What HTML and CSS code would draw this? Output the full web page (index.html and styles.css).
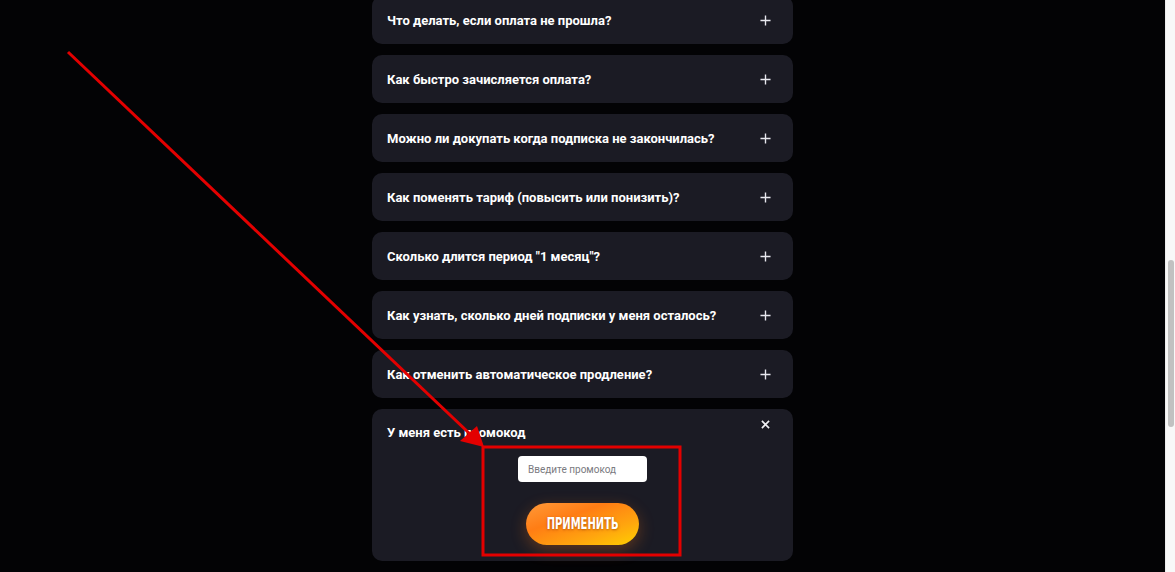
FILE: index.html
```html
<!DOCTYPE html>
<html lang="ru">
<head>
    <meta charset="UTF-8">
    <meta name="viewport" content="width=device-width, initial-scale=1.0">
    <title>Вопросы и ответы</title>
    <link rel="stylesheet" href="styles.css">
</head>
<body>
    <div class="page">
        <main class="content">
            <div class="faq">
                <div class="faq-item">
                    <span class="faq-question">Что делать, если оплата не прошла?</span>
                    <svg class="faq-icon" viewBox="0 0 12 12"><path d="M6 0.5V11.5M0.5 6H11.5"/></svg>
                </div>
                <div class="faq-item">
                    <span class="faq-question">Как быстро зачисляется оплата?</span>
                    <svg class="faq-icon" viewBox="0 0 12 12"><path d="M6 0.5V11.5M0.5 6H11.5"/></svg>
                </div>
                <div class="faq-item">
                    <span class="faq-question">Можно ли докупать когда подписка не закончилась?</span>
                    <svg class="faq-icon" viewBox="0 0 12 12"><path d="M6 0.5V11.5M0.5 6H11.5"/></svg>
                </div>
                <div class="faq-item">
                    <span class="faq-question">Как поменять тариф (повысить или понизить)?</span>
                    <svg class="faq-icon" viewBox="0 0 12 12"><path d="M6 0.5V11.5M0.5 6H11.5"/></svg>
                </div>
                <div class="faq-item">
                    <span class="faq-question">Сколько длится период "1 месяц"?</span>
                    <svg class="faq-icon" viewBox="0 0 12 12"><path d="M6 0.5V11.5M0.5 6H11.5"/></svg>
                </div>
                <div class="faq-item">
                    <span class="faq-question">Как узнать, сколько дней подписки у меня осталось?</span>
                    <svg class="faq-icon" viewBox="0 0 12 12"><path d="M6 0.5V11.5M0.5 6H11.5"/></svg>
                </div>
                <div class="faq-item">
                    <span class="faq-question">Как отменить автоматическое продление?</span>
                    <svg class="faq-icon" viewBox="0 0 12 12"><path d="M6 0.5V11.5M0.5 6H11.5"/></svg>
                </div>
                <div class="promo">
                    <div class="promo-head">
                        <span class="faq-question">У меня есть промокод</span>
                        <svg class="close-icon" viewBox="0 0 10 10"><path d="M1 1L9 9M9 1L1 9"/></svg>
                    </div>
                    <div class="promo-form">
                        <input class="promo-input" type="text" placeholder="Введите промокод">
                        <button class="promo-button"><span class="promo-button-text">ПРИМЕНИТЬ</span></button>
                    </div>
                </div>
            </div>
        </main>
        <div class="scrollbar">
            <div class="scrollbar-thumb"></div>
        </div>
    </div>

    <!-- annotation drawn over the screenshot -->
    <svg class="annotation" viewBox="0 0 1175 572">
        <line x1="68" y1="52" x2="470" y2="434" stroke="#e30000" stroke-width="3"/>
        <polygon points="484,447 460,441 477,426" fill="#e30000"/>
        <rect x="483" y="447" width="197" height="108" fill="none" stroke="#e30000" stroke-width="3"/>
    </svg>
</body>
</html>
```

FILE: styles.css
```css
* {
    margin: 0;
    padding: 0;
    box-sizing: border-box;
}

body {
    font-family: Roboto, 'Liberation Sans', Arial, sans-serif;
    background-color: #030305;
    color: #fff;
    height: 572px;
    overflow: hidden;
}

.page {
    display: flex;
    height: 572px;
}

.content {
    flex: 1;
    display: flex;
    justify-content: center;
}

.faq {
    width: 421px;
    margin-top: -4px;
    display: flex;
    flex-direction: column;
    gap: 11px;
}

.faq-item {
    height: 48px;
    background-color: #1b1b24;
    border-radius: 10px;
    padding: 0 22px 0 15px;
    display: flex;
    align-items: center;
    justify-content: space-between;
}

.faq-question {
    font-size: 13px;
    font-weight: bold;
    color: #fff;
}

.faq-icon {
    width: 11px;
    height: 11px;
    stroke: #e8e8ee;
    stroke-width: 1.5;
    fill: none;
}

.promo {
    height: 152px;
    background-color: #1b1b24;
    border-radius: 10px;
    padding: 10px 22px 0 15px;
}

.promo-head {
    display: flex;
    justify-content: space-between;
    align-items: flex-start;
}

.promo-head .faq-question {
    margin-top: 6px;
}

.close-icon {
    width: 9px;
    height: 9px;
    margin-top: 1px;
    margin-right: 1px;
    stroke: #f0f0f4;
    stroke-width: 1.8;
    fill: none;
}

.promo-form {
    display: flex;
    flex-direction: column;
    align-items: center;
    margin-top: 16px;
    padding-left: 7px;
    gap: 20px;
}

.promo-input {
    width: 129px;
    height: 26px;
    border: none;
    border-radius: 4px;
    background-color: #fff;
    padding: 0 10px;
    font-family: Roboto, 'Liberation Sans', Arial, sans-serif;
    font-size: 10px;
    color: #333;
    outline: none;
}

.promo-input::placeholder {
    color: #7a7a80;
}

.promo-button {
    width: 113px;
    height: 42px;
    margin-top: 1px;
    border: none;
    border-radius: 21px;
    background: linear-gradient(160deg, #ff9a3a 0%, #ff7d14 35%, #ffa60e 70%, #ffd000 100%);
    color: #fff;
    font-family: 'DejaVu Sans', sans-serif;
    font-stretch: condensed;
    font-size: 15px;
    font-weight: bold;
    text-shadow: 0 1px 3px rgba(140, 50, 0, 0.6);
    box-shadow: 0 5px 16px rgba(255, 120, 20, 0.3);
    cursor: pointer;
}

.promo-button-text {
    display: inline-block;
    transform: scaleX(0.74);
}

.scrollbar {
    width: 10px;
    background-color: #f8f8f8;
    border-left: 1px solid #ececec;
    position: relative;
}

.scrollbar-thumb {
    position: absolute;
    top: 260px;
    left: 2px;
    width: 6px;
    height: 167px;
    border-radius: 3px;
    background-color: #c1c1c1;
}

.annotation {
    position: absolute;
    top: 0;
    left: 0;
    width: 1175px;
    height: 572px;
    pointer-events: none;
}
```
